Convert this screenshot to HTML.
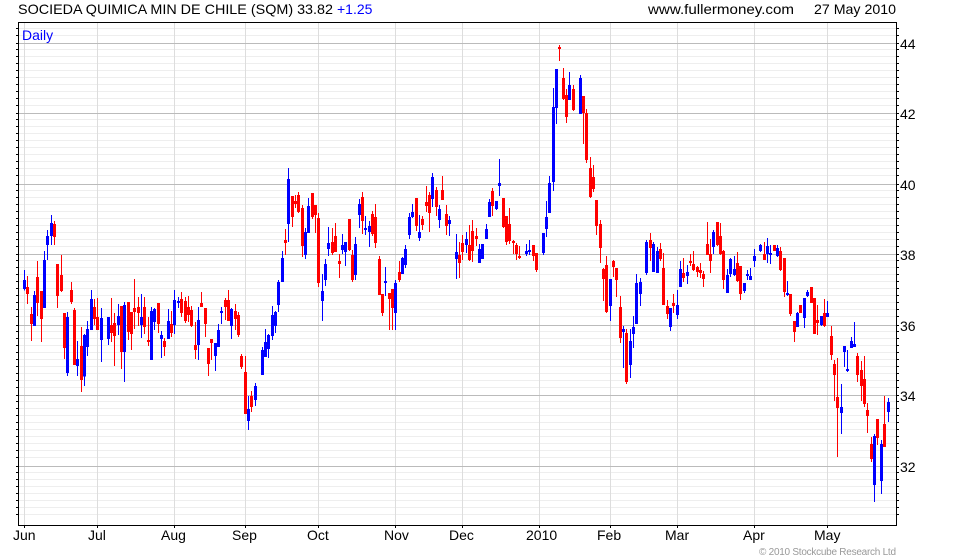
<!DOCTYPE html>
<html><head><meta charset="utf-8"><style>
html,body{margin:0;padding:0;background:#fff;width:980px;height:560px;overflow:hidden}
svg{display:block}
text{font-family:"Liberation Sans",Arial,sans-serif;font-size:14px;fill:#000}
</style></head><body>
<svg width="980" height="560" viewBox="0 0 980 560" xmlns="http://www.w3.org/2000/svg">
<rect width="980" height="560" fill="#fff"/>
<g shape-rendering="crispEdges" fill="none">
<path stroke="#eeeeee" stroke-width="1" d="M19 28.5H896M19 35.5H896M19 49.5H896M19 56.5H896M19 63.5H896M19 70.5H896M19 77.5H896M19 84.5H896M19 91.5H896M19 98.5H896M19 105.5H896M19 119.5H896M19 126.5H896M19 133.5H896M19 140.5H896M19 147.5H896M19 154.5H896M19 161.5H896M19 168.5H896M19 175.5H896M19 190.5H896M19 197.5H896M19 204.5H896M19 211.5H896M19 218.5H896M19 225.5H896M19 232.5H896M19 239.5H896M19 246.5H896M19 260.5H896M19 267.5H896M19 274.5H896M19 281.5H896M19 288.5H896M19 295.5H896M19 302.5H896M19 309.5H896M19 316.5H896M19 331.5H896M19 338.5H896M19 345.5H896M19 352.5H896M19 359.5H896M19 366.5H896M19 373.5H896M19 380.5H896M19 387.5H896M19 401.5H896M19 408.5H896M19 415.5H896M19 422.5H896M19 429.5H896M19 436.5H896M19 443.5H896M19 450.5H896M19 457.5H896M19 472.5H896M19 479.5H896M19 486.5H896M19 493.5H896M19 500.5H896M19 507.5H896M19 514.5H896"/>
<path stroke="#dddddd" stroke-width="1" d="M24.5 23V525M97.5 23V525M174.5 23V525M245.5 23V525M318.5 23V525M395.5 23V525M462.5 23V525M539.5 23V525M610.5 23V525M677.5 23V525M754.5 23V525M827.5 23V525"/>
<path stroke="#bbbbbb" stroke-width="1" d="M19 43.5H896M19 113.5H896M19 184.5H896M19 254.5H896M19 325.5H896M19 395.5H896M19 466.5H896"/>

<!-- Candles frame A -->
<g transform="translate(0.1667,190) scale(0.33333)">
<path stroke="#0000ff" stroke-width="3" d="M73 240V302M103 303V408M133 183V354M142 120V210M154 75V165M202 366V558M232 453V558M253 432V588M262 393V498M274 300V420M304 354V516M325 381V465M355 342V435M373 336V576M424 312V444M454 351V510M463 354V420M484 423V504M505 357V447M523 300V432M535 321V354M595 351V510M646 459V543M655 402V471M664 351V402M694 354V447M745 618V720M766 579V648M787 471V555M796 417V501M805 432V504M817 348V450M826 363V429M835 270V366M847 183V276M865 -66V156M916 114V207M925 24V129M967 252V393M976 207V288M985 111V198"/>
<path stroke="#0000ff" stroke-width="9" d="M73 270V297M103 315V408M133 210V354M142 138V165M154 99V138M202 381V549M232 507V528M253 435V560M262 417V471M274 327V420M304 384V450M325 381V447M355 378V405M373 345V486M424 381V405M454 363V510M463 357V396M484 435V447M505 393V447M523 330V405M535 333V339M595 390V465M646 459V498M655 420V471M664 363V369M694 357V408M745 657V693M766 588V630M787 480V555M796 456V501M805 435V477M817 375V438M826 366V408M835 276V345M847 204V276M865 -33V102M916 126V195M925 48V129M967 303V333M976 222V270M985 159V177"/>
<path stroke="#ff0000" stroke-width="3" d="M82 258V342M94 351V453M112 213V378M124 303V456M163 93V165M172 222V354M184 195V306M193 369V507M214 276V342M223 354V525M244 411V606M283 327V405M292 324V420M334 324V456M343 369V528M364 348V537M385 336V450M394 366V480M403 267V417M415 321V408M433 321V432M445 381V468M475 339V429M493 444V498M514 363V441M544 306V381M556 321V399M565 318V396M574 348V411M586 396V507M604 306V351M616 354V441M625 474V558M634 447V510M676 324V390M685 300V393M706 342V420M715 366V441M724 492V537M736 498V672M754 603V666M856 117V195M877 18V111M886 15V54M895 6V69M907 45V201M937 9V87M946 45V129M955 69V291"/>
<path stroke="#ff0000" stroke-width="9" d="M82 291V312M94 372V402M112 261V339M124 303V387M163 102V141M172 222V318M184 255V303M193 369V474M214 300V336M223 360V525M244 468V570M283 351V387M292 381V420M334 405V429M343 399V438M364 348V486M385 336V426M394 366V432M403 354V366M415 351V369M433 351V411M445 450V456M475 339V402M493 453V471M514 402V429M544 327V369M556 333V393M565 351V375M574 360V408M586 465V480M604 339V351M616 354V402M625 474V522M634 447V459M676 330V351M685 330V393M706 363V387M715 375V435M724 498V531M736 546V672M754 618V651M856 150V159M877 18V81M886 33V42M895 15V66M907 54V168M937 9V81M946 45V75M955 84V279"/>
</g>

<!-- Candles frame B -->
<g transform="translate(330.1667,130) scale(0.33333)">
<path stroke="#0000ff" stroke-width="3" d="M37 312V372M46 336V408M76 321V450M88 207V294M106 258V315M118 273V351M166 411V498M196 450V600M217 381V432M226 345V414M238 249V327M247 222V264M268 255V333M307 129V231M328 225V294M358 258V318M379 312V447M409 306V369M448 342V399M457 342V387M469 282V327M478 207V261M499 213V240M508 87V198M589 342V378M598 330V375M640 309V375M649 213V321M658 138V249"/>
<path stroke="#0000ff" stroke-width="9" d="M37 345V360M46 336V366M76 342V435M88 222V255M106 294V300M118 288V306M166 453V459M196 459V549M217 384V432M226 357V405M238 261V315M247 246V261M268 306V324M307 141V207M328 237V270M358 270V282M379 366V387M409 327V345M448 357V399M457 342V387M469 297V327M478 216V261M499 213V237M508 159V168M589 363V372M598 360V366M640 309V369M649 261V297M658 159V249"/>
<path stroke="#ff0000" stroke-width="3" d="M7 294V375M16 279V366M28 372V444M58 267V363M67 360V456M97 186V312M127 243V318M136 222V354M148 378V495M157 492V558M178 489V600M187 477V600M208 393V456M259 204V303M277 258V300M289 168V246M298 186V306M319 171V258M337 138V210M349 225V315M388 336V444M397 315V390M418 285V393M427 270V396M439 294V348M487 174V258M520 204V294M529 258V345M538 234V342M550 330V372M559 339V390M568 348V387M610 345V393M619 369V426M781 81V204M790 105V186"/>
<path stroke="#ff0000" stroke-width="9" d="M7 336V369M16 318V366M28 393V402M58 267V360M67 375V450M97 201V273M127 252V312M136 261V339M148 387V495M157 492V549M178 489V507M187 477V534M208 426V450M259 204V288M277 267V285M289 216V228M298 195V249M319 180V231M337 180V210M349 252V288M388 375V399M397 339V366M418 345V390M427 303V363M439 318V327M487 183V228M520 204V291M529 258V336M538 282V333M550 333V339M559 345V372M568 378V384M610 345V378M619 369V420M781 114V201M790 141V177"/>
</g>

<!-- Candles frame C -->
<g transform="translate(530.1667,30) scale(0.33333)">
<path stroke="#0000ff" stroke-width="3" d="M70 174V483M79 117V282M118 126V210M151 135V252"/>
<path stroke="#0000ff" stroke-width="9" d="M70 231V456M79 117V234M118 165V210M151 144V252"/>
<path stroke="#ff0000" stroke-width="3" d="M88 45V93M100 114V210M109 177V279M130 165V243M160 198V342M169 237V399"/>
<path stroke="#ff0000" stroke-width="9" d="M88 51V57M100 144V207M109 195V261M130 177V240M160 198V249M169 249V390"/>
</g>

<!-- Candles frame D -->
<g transform="translate(580.1667,200) scale(0.33333)">
<path stroke="#0000ff" stroke-width="3" d="M91 237V363M130 378V504M151 387V534M160 348V444M169 222V372M181 234V318M199 120V225M220 126V216M232 141V219M271 324V393M292 270V357M301 183V261M322 195V252M400 90V162M442 207V279M451 174V231M463 168V228M493 249V279M502 210V240M511 204V240M523 147V201M541 132V156M562 114V189M571 135V192M592 135V171M622 243V288M652 336V381M673 294V384M682 270V291M724 348V378M742 303V351M784 552V702M793 438V501M802 450V516M814 411V444M823 366V441"/>
<path stroke="#0000ff" stroke-width="9" d="M91 237V318M130 387V396M151 423V495M160 381V402M169 249V372M181 246V282M199 126V219M220 132V216M232 153V219M271 324V381M292 315V345M301 207V261M322 216V228M400 96V141M442 225V279M451 177V222M463 207V225M493 249V273M502 222V228M511 228V240M523 168V183M541 135V153M562 138V162M571 159V165M592 144V168M622 279V285M652 339V381M673 294V354M682 276V288M724 348V375M742 339V351M784 621V639M793 438V456M802 507V513M814 423V444M823 432V441"/>
<path stroke="#ff0000" stroke-width="3" d="M49 0V105M61 60V189M70 204V303M79 168V339M100 180V231M109 204V291M121 288V429M139 387V552M211 99V183M241 129V183M250 159V315M262 300V357M280 282V339M310 174V246M331 162V198M340 153V213M352 198V231M361 189V234M370 213V261M382 66V165M391 117V219M412 66V138M421 69V165M430 150V267M472 156V246M481 198V300M553 126V180M583 135V153M601 141V213M613 174V291M631 282V348M643 363V426M661 315V339M694 261V309M703 294V402M712 315V405M733 297V381M754 378V480M763 480V603M772 474V771M832 459V546M844 483V603M853 468V621"/>
<path stroke="#ff0000" stroke-width="9" d="M49 0V78M61 72V144M70 207V237M79 195V336M100 183V201M109 204V240M121 321V414M139 399V546M211 120V144M241 147V177M250 204V315M262 318V342M280 309V318M310 219V234M331 183V189M340 192V210M352 201V216M361 210V219M370 222V237M382 132V165M391 162V183M412 66V135M421 108V162M430 153V240M472 189V243M481 198V282M553 162V180M583 135V153M601 153V210M613 174V276M631 282V342M643 363V396M661 315V339M694 261V309M703 294V402M712 360V369M733 339V378M754 408V465M763 492V525M772 591V624M832 468V525M844 510V558M853 537V612"/>
</g>

<!-- Candles frame E -->
<g transform="translate(740.1667,370) scale(0.33333)">
<path stroke="#0000ff" stroke-width="3" d="M403 192V396M424 210V372M445 84V156"/>
<path stroke="#0000ff" stroke-width="9" d="M403 198V345M424 222V333M445 96V126"/>
<path stroke="#ff0000" stroke-width="3" d="M382 99V189M394 201V276M412 147V225M433 78V231"/>
<path stroke="#ff0000" stroke-width="9" d="M382 120V138M394 222V267M412 147V204M433 162V231"/>
</g>

<!-- Axes -->
<path stroke="#000" stroke-width="1" d="M18.5 22V526M896.5 22V526M18 22.5H897M18 525.5H897"/>
<path stroke="#000" stroke-width="1" d="M16 28.5H18M16 35.5H18M16 43.5H18M16 49.5H18M16 56.5H18M16 63.5H18M16 70.5H18M16 77.5H18M16 84.5H18M16 91.5H18M16 98.5H18M16 105.5H18M16 113.5H18M16 119.5H18M16 126.5H18M16 133.5H18M16 140.5H18M16 147.5H18M16 154.5H18M16 161.5H18M16 168.5H18M16 175.5H18M16 184.5H18M16 190.5H18M16 197.5H18M16 204.5H18M16 211.5H18M16 218.5H18M16 225.5H18M16 232.5H18M16 239.5H18M16 246.5H18M16 254.5H18M16 260.5H18M16 267.5H18M16 274.5H18M16 281.5H18M16 288.5H18M16 295.5H18M16 302.5H18M16 309.5H18M16 316.5H18M16 325.5H18M16 331.5H18M16 338.5H18M16 345.5H18M16 352.5H18M16 359.5H18M16 366.5H18M16 373.5H18M16 380.5H18M16 387.5H18M16 395.5H18M16 401.5H18M16 408.5H18M16 415.5H18M16 422.5H18M16 429.5H18M16 436.5H18M16 443.5H18M16 450.5H18M16 457.5H18M16 466.5H18M16 472.5H18M16 479.5H18M16 486.5H18M16 493.5H18M16 500.5H18M16 507.5H18M16 514.5H18"/>
<path stroke="#000" stroke-width="1" d="M897 28.5H899M897 35.5H899M897 43.5H899M897 49.5H899M897 56.5H899M897 63.5H899M897 70.5H899M897 77.5H899M897 84.5H899M897 91.5H899M897 98.5H899M897 105.5H899M897 113.5H899M897 119.5H899M897 126.5H899M897 133.5H899M897 140.5H899M897 147.5H899M897 154.5H899M897 161.5H899M897 168.5H899M897 175.5H899M897 184.5H899M897 190.5H899M897 197.5H899M897 204.5H899M897 211.5H899M897 218.5H899M897 225.5H899M897 232.5H899M897 239.5H899M897 246.5H899M897 254.5H899M897 260.5H899M897 267.5H899M897 274.5H899M897 281.5H899M897 288.5H899M897 295.5H899M897 302.5H899M897 309.5H899M897 316.5H899M897 325.5H899M897 331.5H899M897 338.5H899M897 345.5H899M897 352.5H899M897 359.5H899M897 366.5H899M897 373.5H899M897 380.5H899M897 387.5H899M897 395.5H899M897 401.5H899M897 408.5H899M897 415.5H899M897 422.5H899M897 429.5H899M897 436.5H899M897 443.5H899M897 450.5H899M897 457.5H899M897 466.5H899M897 472.5H899M897 479.5H899M897 486.5H899M897 493.5H899M897 500.5H899M897 507.5H899M897 514.5H899"/>
<path stroke="#000" stroke-width="1" d="M24.5 526V528M97.5 526V528M174.5 526V528M245.5 526V528M318.5 526V528M395.5 526V528M462.5 526V528M539.5 526V528M610.5 526V528M677.5 526V528M754.5 526V528M827.5 526V528"/>
</g>

<!-- Text -->
<text x="18" y="14" textLength="315" lengthAdjust="spacingAndGlyphs">SOCIEDA QUIMICA MIN DE CHILE (SQM) 33.82</text>
<text x="337" y="14" style="fill:#0000ff">+1.25</text>
<text x="648" y="14" textLength="146" lengthAdjust="spacingAndGlyphs">www.fullermoney.com</text>
<text x="814" y="14" textLength="82" lengthAdjust="spacingAndGlyphs">27 May 2010</text>
<text x="22" y="40" style="fill:#0000ff">Daily</text>
<text x="900" y="49">44</text>
<text x="900" y="119">42</text>
<text x="900" y="190">40</text>
<text x="900" y="260">38</text>
<text x="900" y="331">36</text>
<text x="900" y="401">34</text>
<text x="900" y="472">32</text>
<text x="13" y="540">Jun</text>
<text x="88" y="540">Jul</text>
<text x="161" y="540">Aug</text>
<text x="232" y="540">Sep</text>
<text x="307" y="540">Oct</text>
<text x="384" y="540">Nov</text>
<text x="449" y="540">Dec</text>
<text x="526" y="540">2010</text>
<text x="597" y="540">Feb</text>
<text x="665" y="540">Mar</text>
<text x="743" y="540">Apr</text>
<text x="814" y="540">May</text>
<text x="759" y="555" textLength="137" lengthAdjust="spacing" style="font-size:10px;fill:#999999">© 2010 Stockcube Research Ltd</text>
</svg>
</body></html>
